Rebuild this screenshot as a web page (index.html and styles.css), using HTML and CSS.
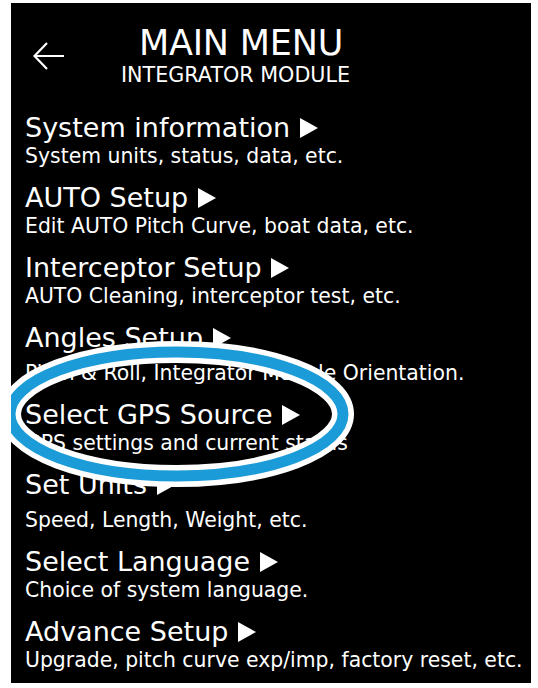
FILE: index.html
```html
<!DOCTYPE html>
<html lang="en">
<head>
<meta charset="utf-8">
<title>Main Menu</title>
<link rel="stylesheet" href="styles.css">
</head>
<body>
<div class="panel">
  <header class="head">
    <svg class="back" width="32" height="28" viewBox="0 0 32 28" aria-hidden="true">
      <path d="M31 14H2M14 1L1.5 14L14 27" fill="none" stroke="#fff" stroke-width="2.2" stroke-linecap="butt" stroke-linejoin="miter"/>
    </svg>
    <div class="titles">
      <div class="title">MAIN MENU</div>
      <div class="subtitle">INTEGRATOR MODULE</div>
    </div>
  </header>
  <ul class="menu">
    <li class="item"><div class="name">System information <span class="tri"></span></div><div class="desc">System units, status, data, etc.</div></li>
    <li class="item"><div class="name">AUTO Setup <span class="tri"></span></div><div class="desc">Edit AUTO Pitch Curve, boat data, etc.</div></li>
    <li class="item"><div class="name">Interceptor Setup <span class="tri"></span></div><div class="desc">AUTO Cleaning, interceptor test, etc.</div></li>
    <li class="item wide"><div class="name">Angles Setup <span class="tri"></span></div><div class="desc">Pitch &amp; Roll, Integrator Module Orientation.</div></li>
    <li class="item"><div class="name">Select GPS Source <span class="tri"></span></div><div class="desc">GPS settings and current status</div></li>
    <li class="item wide"><div class="name">Set Units <span class="tri"></span></div><div class="desc">Speed, Length, Weight, etc.</div></li>
    <li class="item"><div class="name">Select Language <span class="tri"></span></div><div class="desc">Choice of system language.</div></li>
    <li class="item"><div class="name">Advance Setup <span class="tri"></span></div><div class="desc">Upgrade, pitch curve exp/imp, factory reset, etc.</div></li>
  </ul>
  <svg class="ring" width="370" height="170" viewBox="0 0 370 170" aria-hidden="true">
    <ellipse cx="176.5" cy="84" rx="166.5" ry="62" fill="none" stroke="#fff" stroke-width="22"/>
    <ellipse cx="176.5" cy="84" rx="166.5" ry="62" fill="none" stroke="#1b9bd7" stroke-width="11"/>
  </svg>
</div>
</body>
</html>
```
FILE: styles.css
```css
html, body {
  margin: 0;
  padding: 0;
  background: #fff;
}
body {
  font-family: "DejaVu Sans", Verdana, sans-serif;
  color: #fff;
}
.panel {
  position: relative;
  box-sizing: border-box;
  width: 520px;
  height: 680px;
  margin: 3px 0 0 11px;
  background: #000;
  overflow: hidden;
}
.head {
  display: flex;
  align-items: flex-start;
  height: 109px;
}
.back {
  display: block;
  margin: 39px 0 0 22px;
}
.titles {
  margin-left: 56px;
  padding-top: 20px;
}
.title {
  font-size: 35px;
  line-height: 40px;
  margin-left: 18px;
  letter-spacing: -0.2px;
}
.subtitle {
  font-size: 20.7px;
  line-height: 24px;
}
.menu {
  list-style: none;
  margin: 0;
  padding: 0 0 0 14px;
}
.item {
  margin-bottom: 14px;
}
.name {
  font-size: 27px;
  line-height: 32px;
  white-space: nowrap;
}
.item.wide .name {
  margin-bottom: 7px;
}
.desc {
  font-size: 20.4px;
  line-height: 24px;
  white-space: nowrap;
}
.tri {
  display: inline-block;
  width: 0;
  height: 0;
  border-left: 18px solid #fff;
  border-top: 10px solid transparent;
  border-bottom: 10px solid transparent;
  margin-left: 1px;
  vertical-align: -1px;
}
.ring {
  position: absolute;
  left: -11px;
  top: 327px;
}
```
